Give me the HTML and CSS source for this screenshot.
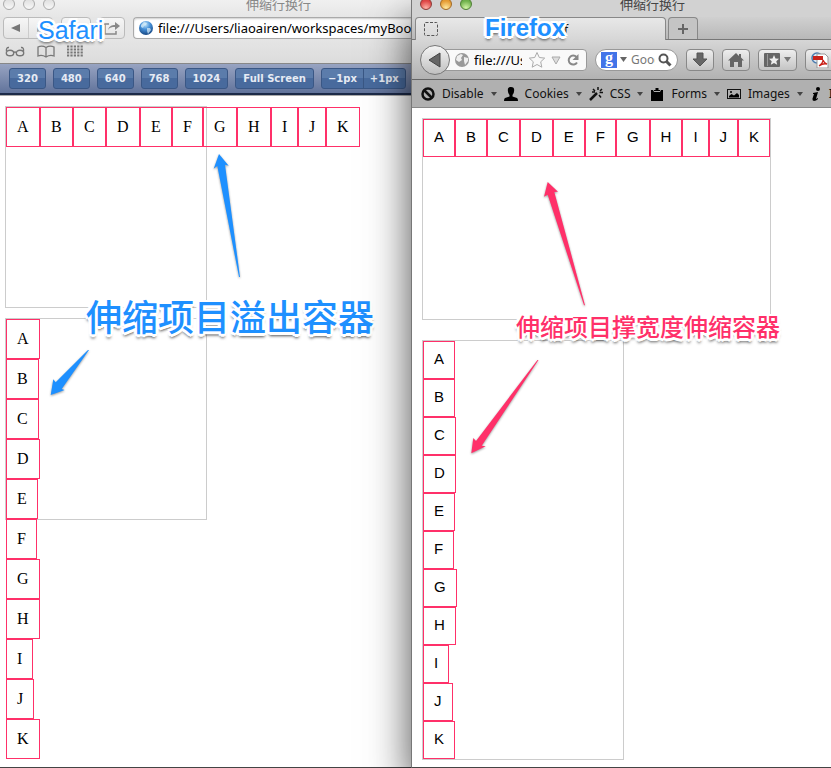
FILE: index.html
```html
<!DOCTYPE html>
<html lang="zh-CN">
<head>
<meta charset="utf-8">
<title>伸缩行换行</title>
<link rel="stylesheet" href="styles.css">
</head>
<body>
<section class="window safari">
  <header class="titlebar"><span class="lights"><i></i><i></i><i></i></span><h1>伸缩行换行</h1></header>
  <div class="toolbar">
    <div class="group">
      <button aria-label="Back"><svg width="10" height="10"><path d="M9 1v8L0 5z" fill="#777"/></svg></button>
      <button aria-label="Forward"><svg width="10" height="10"><path d="M1 1v8l9-4z" fill="#aaa"/></svg></button>
    </div>
    <div class="group"><button class="cloud" aria-label="iCloud tabs"><svg width="18" height="12"><path d="M4 11a3 3 0 0 1 0-6 5 5 0 0 1 9-1 3 3 0 0 1 1 7z" fill="#888"/></svg></button></div>
    <div class="group"><button class="share" aria-label="Share"><svg width="18" height="16" fill="none" stroke="#888" stroke-width="1.500"><path d="M6 4H2v10h11v-3"/><path d="M5 10c1-4 4-5 7-5V2l5 4-5 4V7C9 7 7 7 5 10z" fill="#888" stroke="none"/></svg></button></div>
    <label class="address"><svg width="16" height="16"><defs><radialGradient id="earth" cx=".45" cy=".25" r=".7"><stop offset="0" stop-color="#bfe5fb"/><stop offset=".5" stop-color="#4690d8"/><stop offset="1" stop-color="#1c4f8c"/></radialGradient></defs><circle cx="8" cy="8" r="7" fill="url(#earth)"/><path d="M3 5l3-3 3 1-1 2-2 1-1 2-2-1zM9 8h3l1 2-3 4-1-3z" fill="#dceffa" opacity=".7"/></svg><input aria-label="Address" value="file:///Users/liaoairen/workspaces/myBook"></label>
  </div>
  <nav class="bookmarks">
    <a href="#" aria-label="Reading list"><svg width="20" height="12" fill="none" stroke="#777" stroke-width="1.400"><ellipse cx="5" cy="8" rx="3.700" ry="2.800"/><ellipse cx="15" cy="8" rx="3.700" ry="2.800"/><path d="M8.500 7.500q1.500-1 3 0M1.500 6.500Q1 2 4 2.500M18.500 6.500Q19 2 16 2.500"/></svg></a>
    <a href="#" aria-label="Bookmarks"><svg width="18" height="13" fill="none" stroke="#777" stroke-width="1.300"><path d="M9 2.500Q5 0 1 2v9q4-1.500 8 1 4-2.500 8-1V2Q13 0 9 2.500v9"/></svg></a>
    <a href="#" aria-label="Top sites"><svg width="16" height="12"><path d="M0 1.500h16M0 4.500h16M0 7.500h16M0 10.500h16" stroke="#777" stroke-width="2" stroke-dasharray="2.200 1.200"/></svg></a>
  </nav>
  <div class="sizes">
    <button>320</button><button>480</button><button>640</button><button>768</button><button>1024</button><button>Full Screen</button>
    <div class="pair"><button>−1px</button><button>+1px</button></div>
  </div>
  <main class="page">
    <div class="box row"><span>A</span><span>B</span><span>C</span><span>D</span><span>E</span><span>F</span><span>G</span><span>H</span><span>I</span><span>J</span><span>K</span></div>
    <div class="box column"><span>A</span><span>B</span><span>C</span><span>D</span><span>E</span><span>F</span><span>G</span><span>H</span><span>I</span><span>J</span><span>K</span></div>
  </main>
  <svg class="arrows" width="260" height="400" fill="#1e90ff"><path d="M219 154l-5.300 14.700 3.600-2.700L239 277h1L225 164.700l3.700 1z"/><path d="M50.700 395l2.600-15.700 2.400 3L88 350h1L61.700 389l3 1z"/></svg>
  <strong class="note safari-name">Safari</strong>
  <strong class="note overflow-note">伸缩项目溢出容器</strong>
</section>

<section class="window firefox">
  <header class="titlebar"><span class="lights"><i></i><i></i><i></i></span><h1>伸缩行换行</h1></header>
  <div class="tabs">
    <div class="tab"><svg width="14" height="14"><rect x=".5" y=".5" width="13" height="13" rx="1" fill="none" stroke="#555" stroke-dasharray="3 1.500"/></svg><span>f</span></div>
    <button class="new-tab" aria-label="New tab"><svg width="12" height="12"><path d="M6 1v10M1 6h10" stroke="#666" stroke-width="2"/></svg></button>
  </div>
  <div class="navbar">
    <button class="back" aria-label="Back"><svg width="14" height="16"><path d="M12 1v14L1 8z" fill="#666" stroke="#444"/></svg></button>
    <label class="url">
      <svg width="16" height="16"><circle cx="8" cy="8" r="7" fill="#999"/><path d="M3 4l4-2 2 1-2 3 1 2-3 2-3-2zM10 5l4 1 0 3-3 4-1-4z" fill="#eee"/></svg>
      <input aria-label="Address" value="file:///Users">
      <svg width="18" height="18"><path d="M9 1.500l2.300 5 5.400.6-4 3.700 1.100 5.400L9 13.500l-4.800 2.700 1.100-5.400-4-3.700 5.400-.6z" fill="#f8f8f8" stroke="#aaa"/></svg>
      <svg width="12" height="10"><path d="M2 2h8L6 9z" fill="#ddd" stroke="#aaa"/></svg>
      <svg width="14" height="14"><path d="M10.500 4A4.500 4.500 0 1 0 11 9.500" fill="none" stroke="#888" stroke-width="2"/><path d="M12.500 1v6h-6z" fill="#888"/></svg>
    </label>
    <label class="search">
      <span class="google">g</span><svg width="8" height="6"><path d="M0 0h7L3.500 5z" fill="#666"/></svg>
      <input aria-label="Search" placeholder="Google">
      <svg width="14" height="14" fill="none" stroke="#555" stroke-width="2"><circle cx="5.500" cy="5.500" r="4"/><path d="M8.500 8.500l4 4" stroke-width="3"/></svg>
    </label>
    <button class="tool" aria-label="Downloads"><svg width="16" height="16"><path d="M5 1h6v6h4l-7 7-7-7h4z" fill="#666" stroke="#555"/></svg></button>
    <button class="tool" aria-label="Home"><svg width="16" height="16"><path d="M8 1L0 8.500h2V15h4v-5h4v5h4V8.500h2L13 5.500V2h-2v2z" fill="#666"/></svg></button>
    <button class="tool wide" aria-label="Bookmarks"><svg width="16" height="14"><rect width="16" height="14" rx="1" fill="#666"/><path d="M3.500 1v12" stroke="#999"/><path d="M10 2l1.500 3.500 3.500.3-2.700 2.400.9 3.600L10 10l-3.200 1.800.9-3.600L5 5.800l3.500-.3z" fill="#eee"/></svg><svg width="8" height="6"><path d="M0 0h7L3.500 5z" fill="#777"/></svg></button>
    <button class="tool pdf" aria-label="Convert to PDF"><svg width="18" height="16"><circle cx="6" cy="6" r="5" fill="#d9e6f3" stroke="#4c7cae" stroke-width="1.500"/><path d="M6 2h8l3 3v11H6z" fill="#fff" stroke="#999"/><path d="M2 4h10v4H2z" fill="#c92119"/><path d="M8 14q4-3 4-6 1 3 4 4-4-1-8 2z" fill="none" stroke="#c92119" stroke-width="1.300"/></svg></button>
  </div>
  <nav class="devbar">
    <a href="#"><svg width="14" height="14" fill="none" stroke="#111" stroke-width="2.500"><circle cx="7" cy="7" r="5.500"/><path d="M3 3l8 8"/></svg>Disable<i></i></a>
    <a href="#"><svg width="14" height="14"><path d="M7 0c3 0 3.500 2 3 4.500C10 6 9 7 8.500 8v1.500L13 11q1 .5 1 3H0q0-2.500 1-3l4.500-1.500V8C5 7 4 6 4 4.500 3.500 2 4 0 7 0z"/></svg>Cookies<i></i></a>
    <a href="#"><svg width="14" height="14" stroke="#111"><path d="M1 13l7-7" stroke-width="2.500"/><path d="M9 0v3M4 2l2 2M13 2l-2 2M10.500 5.500H14M10 8l2 2.500M3 5h3" stroke-width="1.500"/></svg>CSS<i></i></a>
    <a href="#"><svg width="14" height="14"><path d="M1 3h2l1 2h6l1-2h2v11H1zM4 3h1.500V1h3v2H10v1H4z"/></svg>Forms<i></i></a>
    <a href="#"><svg width="14" height="12"><rect x=".5" y="1.500" width="13" height="9" fill="none" stroke="#111"/><path d="M2 9.500V8l2.500-2L7 7.500 10 5l2 2v2.500z"/><circle cx="4" cy="4" r="1"/></svg>Images<i></i></a>
    <a href="#"><svg width="12" height="14"><circle cx="8" cy="2" r="2"/><path d="M3 6l5-1-2 7 2-1v1q-2 2-4 2-2-.5-1.500-2.500L4 7H3z"/></svg>Information</a>
  </nav>
  <main class="page">
    <div class="box row"><span>A</span><span>B</span><span>C</span><span>D</span><span>E</span><span>F</span><span>G</span><span>H</span><span>I</span><span>J</span><span>K</span></div>
    <div class="box column"><span>A</span><span>B</span><span>C</span><span>D</span><span>E</span><span>F</span><span>G</span><span>H</span><span>I</span><span>J</span><span>K</span></div>
  </main>
  <svg class="arrows" width="180" height="460" viewBox="412 0 180 460" fill="#ff3069"><path d="M547.700 182L544 196.700l3.700-2L584 305.300h1L554.300 192l3.700-.3z"/><path d="M471.300 453.300l2-15.300 2.700 3L537.500 360h1L481.700 445.700l4 .6z"/></svg>
  <strong class="note firefox-name">Firefox</strong>
  <strong class="note stretch-note">伸缩项目撑宽度伸缩容器</strong>
</section>
</body>
</html>
```
FILE: styles.css
```css
* { box-sizing: border-box; }
body {
  margin: 0;
  min-height: 100vh;
  display: grid;
  grid-template-columns: 411fr 420fr;
  overflow: hidden;
  font: 12px "Noto Sans", "Noto Sans CJK SC", sans-serif;
  color: #111;
}
button, input { font: inherit; color: inherit; margin: 0; padding: 0; border: 0; background: none; }
input { min-width: 0; outline: 0; }
button, a, label { display: flex; align-items: center; }
button { justify-content: center; flex: none; }
a { color: inherit; text-decoration: none; }
svg { display: block; flex: none; }

.window {
  position: relative;
  min-width: 0;
  display: flex;
  flex-direction: column;
  background: #fff;
  border-bottom: 1px solid #444;
}
.safari > :not(.note):not(.arrows) { overflow: hidden; }
.firefox {
  border-left: 1px solid #777;
  box-shadow: 0 20px 40px rgba(0, 0, 0, .7);
}

.titlebar { position: relative; height: 17px; display: flex; justify-content: center; }
.titlebar h1 { margin: -4px 0 0; font-size: 13px; line-height: 17px; font-weight: 400; }
.lights { position: absolute; left: 3px; top: -2px; display: flex; gap: 8px; }
.lights i { width: 12px; height: 12px; border-radius: 50%; border: 1px solid #aaa; background: linear-gradient(#ddd, #f8f8f8); }
.safari .titlebar { background: linear-gradient(#f0f0f0, #e6e6e6); color: #888; padding-left: 146px; }
.firefox .titlebar { background: #d2d2d2; color: #444; padding-left: 62px; }
.firefox .lights { left: 8px; }
.firefox .lights i { border-color: #8c3a36; background: radial-gradient(circle at 50% 90%, #ffb3a8, #dd4444 70%); }
.firefox .lights i:nth-child(2) { border-color: #a26a25; background: radial-gradient(circle at 50% 90%, #ffeaa0, #e49a32 70%); }
.firefox .lights i:nth-child(3) { border-color: #4f7f35; background: radial-gradient(circle at 50% 90%, #d4f7a8, #6db04a 70%); }

.toolbar { display: flex; gap: 8px; padding-left: 3px; height: 22px; background: #e5e5e5; }
.group { display: flex; border: 1px solid #bbb; border-radius: 4px; background: linear-gradient(#f6f6f6, #e4e4e4); }
.group button { width: 24px; }
.group button + button { border-left: 1px solid #ccc; }
.group .cloud { width: 28px; }
.group .share { width: 24px; }
.address { flex: 1; gap: 4px; padding-left: 4px; border: 1px solid #aaa; border-right: 0; border-radius: 4px 0 0 4px; background: #fff; box-shadow: inset 0 1px 2px #ccc; font-size: 13px; color: #000; }
.address input { flex: 1; }
.bookmarks { display: flex; align-items: center; gap: 12px; height: 24px; padding: 0 5px; background: linear-gradient(#e5e5e5, #dcdcdc); }
.sizes {
  display: flex; gap: 7px; height: 32px; padding: 4px 9px;
  background: linear-gradient(#98a4c2, #61739b);
  border-top: 1px solid #888; border-bottom: 2px solid #1c2a48;
  font: bold 10px "DejaVu Sans", sans-serif; color: #e6ebf4;
  text-shadow: 0 -1px 0 #2f4b78;
}
.sizes > * { flex: none; border: 1px solid #3a5785; border-radius: 3px; background: linear-gradient(#5b7cab 50%, #486a9d 50%); }
.sizes button { padding: 0 7px; white-space: nowrap; }
.pair { display: flex; }
.pair button { padding: 0 6px; }
.pair button + button { border-left: 1px solid #3a5785; }

.box { border: 1px solid #ccc; width: 202px; height: 202px; display: flex; align-items: flex-start; }
.box span { flex: none; padding: 10px; border: 1px solid #ff3069; }
.column { flex-direction: column; }
.safari .page { border-top: 1px solid #aaa; padding: 10px 0 7px 5px; font: 16px/18px "Liberation Serif", serif; color: #000; }
.safari .box + .box { margin-top: 10px; }
.safari .row { display: grid; grid-template-columns: 34px 33px 33px 34px 32px 31px 34px 34px 27px 28px 34px; }
.safari .column { margin-bottom: 240px; }

.tabs { display: flex; height: 23px; padding-left: 3px; background: linear-gradient(#d0d0d0, #b8b8b8); border-bottom: 1px solid #777; }
.tab { flex: 0 1 251px; height: 23px; display: flex; align-items: center; gap: 126px; padding-left: 8px; border: 1px solid #888; border-bottom: 0; border-radius: 4px 4px 0 0; background: linear-gradient(#e8e8e8, #d6d6d6); }
.new-tab { width: 30px; margin-left: 2px; border: 1px solid #888; border-bottom: 0; border-radius: 4px 4px 0 0; background: #c4c4c4; }
.navbar { display: flex; align-items: center; gap: 8px; height: 39px; padding-left: 8px; overflow: hidden; background: linear-gradient(#d6d6d6, #b2b2b2); }
.back { position: relative; z-index: 1; width: 30px; height: 30px; border: 1px solid #777; border-radius: 50%; background: linear-gradient(#f4f4f4, #c0c0c0); }
.url { width: 147px; height: 22px; margin-left: -18px; padding: 0 6px 0 13px; gap: 4px; border: 1px solid #999; border-radius: 0 4px 4px 0; background: #f9f9f9; font-size: 13px; }
.url input { flex: 1; margin-right: 2px; color: #000; }
.search { width: 83px; height: 22px; padding: 0 5px; gap: 3px; border: 1px solid #999; border-radius: 11px; background: #fff; }
.search input { flex: 1; }
.search input::placeholder { color: #777; opacity: 1; }
.google { flex: none; width: 16px; height: 16px; background: #4274e8; color: #fff; font: bold 16px/12px "Liberation Serif", serif; text-align: center; }
.tool { width: 28px; height: 22px; gap: 4px; border: 1px solid #888; border-radius: 4px; background: linear-gradient(#eee, #c4c4c4); }
.wide { width: 39px; }
.pdf { width: 39px; padding-left: 5px; justify-content: flex-start; }
.devbar { display: flex; align-items: center; gap: 7px; height: 29px; padding-left: 9px; overflow: hidden; background: #b0b0b0; border-top: 1px solid #666; border-bottom: 1px solid #888; }
.devbar a { flex: none; gap: 7px; }
.devbar i { border: 3px solid transparent; border-top: 4px solid #444; border-bottom: 0; }
.firefox .page { padding: 10px 10px 7px; font: 15px/16px "Liberation Sans", sans-serif; color: #000; }
.firefox .box + .box { margin-top: 20px; }
.firefox .box span { padding: 9px 10px 11px; }
.firefox .row { width: fit-content; }
.firefox .column { height: auto; }

.arrows { position: absolute; left: 0; top: 0; filter: drop-shadow(0 1px 1px rgba(0, 0, 0, .4)); }
.note {
  position: absolute;
  white-space: nowrap;
  text-shadow: 2px 0 #fff, -2px 0 #fff, 0 2px #fff, 0 -2px #fff, 2px 2px #fff, -2px 2px #fff, 2px -2px #fff, -2px -2px #fff, 3px 0 #fff, -3px 0 #fff, 0 3px #fff, 0 4px 3px rgba(0, 0, 0, .7);
  color: #1e90ff;
}
.safari-name { left: 38px; top: 15px; font: 25px/30px "Liberation Sans", sans-serif; }
.firefox-name { left: 73px; top: 13px; font: bold 24px/30px "Liberation Sans", sans-serif; }
.overflow-note { left: 86px; top: 295px; font: 500 36px/40px "Noto Sans CJK SC", sans-serif; }
.stretch-note { left: 104px; top: 311px; font: 500 24px/30px "Noto Sans CJK SC", sans-serif; color: #ff3069; }
```
